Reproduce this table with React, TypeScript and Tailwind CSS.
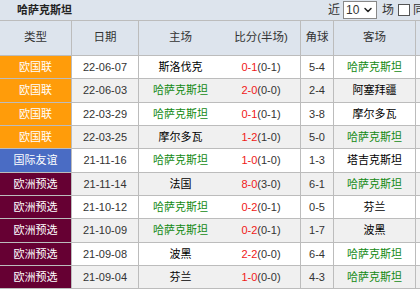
import { ChevronDown } from 'lucide-react';

interface Match {
  type: 'nations' | 'friendly' | 'euro';
  date: string;
  home: string;
  score: string;
  half: string;
  corner: string;
  away: string;
}

const TEAM = '哈萨克斯坦';

const matches: Match[] = [
  { type: 'nations', date: '22-06-07', home: '斯洛伐克', score: '0-1', half: '(0-1)', corner: '5-4', away: TEAM },
  { type: 'nations', date: '22-06-03', home: TEAM, score: '2-0', half: '(0-0)', corner: '2-4', away: '阿塞拜疆' },
  { type: 'nations', date: '22-03-29', home: TEAM, score: '0-1', half: '(0-1)', corner: '3-8', away: '摩尔多瓦' },
  { type: 'nations', date: '22-03-25', home: '摩尔多瓦', score: '1-2', half: '(1-0)', corner: '5-0', away: TEAM },
  { type: 'friendly', date: '21-11-16', home: TEAM, score: '1-0', half: '(1-0)', corner: '1-3', away: '塔吉克斯坦' },
  { type: 'euro', date: '21-11-14', home: '法国', score: '8-0', half: '(3-0)', corner: '6-1', away: TEAM },
  { type: 'euro', date: '21-10-12', home: TEAM, score: '0-2', half: '(0-1)', corner: '0-5', away: '芬兰' },
  { type: 'euro', date: '21-10-09', home: TEAM, score: '0-2', half: '(0-1)', corner: '1-7', away: '波黑' },
  { type: 'euro', date: '21-09-08', home: '波黑', score: '2-2', half: '(0-0)', corner: '6-4', away: TEAM },
  { type: 'euro', date: '21-09-04', home: '芬兰', score: '1-0', half: '(0-0)', corner: '4-3', away: TEAM },
];

const typeStyle = {
  nations: { label: '欧国联', cls: 'bg-[#ff9c0a]' },
  friendly: { label: '国际友谊', cls: 'bg-[#4a6cc4]' },
  euro: { label: '欧洲预选', cls: 'bg-[#660033]' },
};

const teamCls = (name: string) => (name === TEAM ? 'text-[#138a13]' : 'text-black');

const App = () => {
  return (
    <div
      className="w-[420px] h-[289px] overflow-hidden bg-white text-[11px] text-[#333]"
      style={{ fontFamily: '"Liberation Sans", "Noto Sans CJK SC", sans-serif' }}
    >
      <div className="w-[440px]">
        {/* Top bar */}
        <div className="h-[21px] flex items-center justify-between bg-[#dde4ed] border-b border-[#bcbcbc] pl-[17px]">
          <span className="font-bold text-[11px] text-[#222]">{TEAM}</span>
          <div className="flex items-center w-[112px] gap-[3px] text-[12px] text-[#333]">
            <span>近</span>
            <div className="flex items-center justify-between w-[34px] h-[18px] bg-white border border-[#888] px-[2px] text-[12px]">
              <span>10</span>
              <ChevronDown size={12} strokeWidth={3} className="text-[#222]" />
            </div>
            <span className="ml-[2px]">场</span>
            <span className="w-[12px] h-[12px] border border-[#555] bg-white ml-[1px]" />
            <span>同</span>
          </div>
        </div>

        {/* Header row */}
        <div className="h-[35px] flex bg-[#dde4ed] border-b border-[#bcbcbc] text-[11.5px] text-[#333]">
          <div className="w-[72px] border-r border-[#bcbcbc] flex items-center justify-center">类型</div>
          <div className="w-[67px] border-r border-[#bcbcbc] flex items-center justify-center">日期</div>
          <div className="w-[83px] flex items-center justify-center">主场</div>
          <div className="w-[79px] border-r border-[#bcbcbc] flex items-center justify-center">比分(半场)</div>
          <div className="w-[33px] border-r border-[#bcbcbc] flex items-center justify-center">角球</div>
          <div className="w-[82px] border-r border-[#bcbcbc] flex items-center justify-center">客场</div>
          <div className="flex-1" />
        </div>

        {/* Rows */}
        {matches.map((m, i) => (
          <div
            key={m.date}
            className={`h-[23.33px] flex border-b border-[#bcbcbc] ${i % 2 === 1 ? 'bg-[#f0f0f0]' : 'bg-white'}`}
          >
            <div className={`w-[72px] border-r border-[#bcbcbc] flex items-center justify-center text-white ${typeStyle[m.type].cls}`}>
              {typeStyle[m.type].label}
            </div>
            <div className="w-[67px] border-r border-[#bcbcbc] flex items-center justify-center text-[#333]">{m.date}</div>
            <div className={`w-[83px] flex items-center justify-center ${teamCls(m.home)}`}>{m.home}</div>
            <div className="w-[79px] border-r border-[#bcbcbc] flex items-center justify-center">
              <span className="text-[#f01818]">{m.score}</span>
              <span className="text-[#333]">{m.half}</span>
            </div>
            <div className="w-[33px] border-r border-[#bcbcbc] flex items-center justify-center text-[#333]">{m.corner}</div>
            <div className={`w-[82px] border-r border-[#bcbcbc] flex items-center justify-center ${teamCls(m.away)}`}>{m.away}</div>
            <div className="flex-1" />
          </div>
        ))}
      </div>
    </div>
  );
};

export default App;
